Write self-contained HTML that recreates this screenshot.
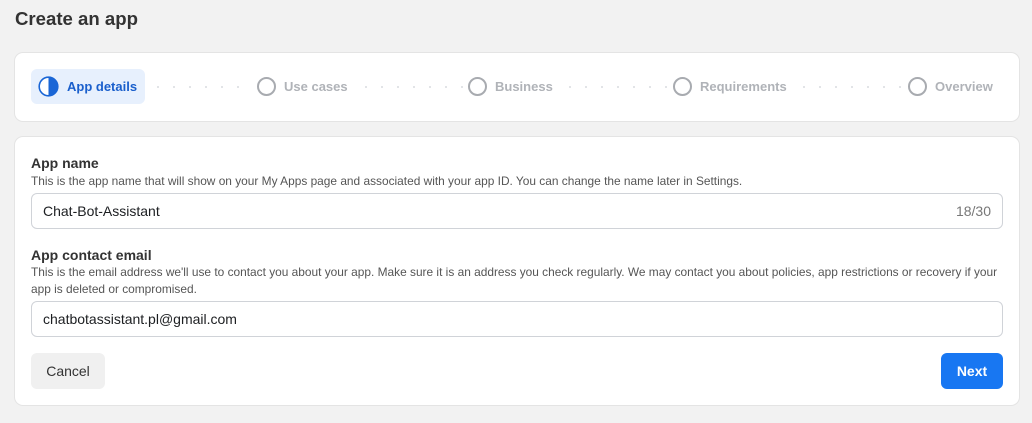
<!DOCTYPE html>
<html><head><style>
*{box-sizing:border-box;margin:0;padding:0}
body{width:1032px;height:423px;background:#f2f2f2;font-family:"Liberation Sans",Arial,sans-serif;color:#1c1e21;position:relative;overflow:hidden}
.abs{position:absolute}
h1{position:absolute;left:15px;top:8px;font-size:18.6px;font-weight:bold;color:#333}
.card{position:absolute;left:15px;width:1004px;background:#fff;border-radius:8px;box-shadow:0 0 0 1px #e4e4e4}
.step{position:absolute;top:76px;height:21px;display:flex;align-items:center;font-size:13px;font-weight:bold;color:#b0b3b8}
.circ{width:19px;height:19px;border:2px solid #a8abb0;border-radius:50%;margin-right:8px}
.dots{position:absolute;top:86px;height:2px;background-image:radial-gradient(circle,#e0e2e5 1px,transparent 1.2px);background-size:16px 2px}
.lbl{position:absolute;left:31px;font-size:14px;font-weight:bold;color:#333}
.desc{position:absolute;left:31px;font-size:11.9px;color:#555;line-height:17px;width:975px}
.inp{position:absolute;left:31px;width:972px;height:36px;border:1px solid #d0d3d8;border-radius:6px;font-size:14px;color:#1c1e21;padding:0 11px;line-height:34px}
.btn{position:absolute;top:353px;height:36px;border-radius:6px;font-size:14px;line-height:36px;text-align:center}
</style></head><body>
<h1>Create an app</h1>
<div class="card" style="top:53px;height:68px"></div>
<div class="abs" style="left:31px;top:69px;width:114px;height:35px;background:#e7f0fd;border-radius:6px"></div>
<svg class="abs" style="left:38px;top:76px" width="21" height="21" viewBox="0 0 21 21"><circle cx="10.5" cy="10.5" r="9.3" fill="#fff" stroke="#1a66d6" stroke-width="1.6"/><path d="M10.5 1.2 A9.3 9.3 0 0 1 10.5 19.8 Z" fill="#1a66d6"/></svg>
<div class="step" style="left:67px;color:#1a5fcc">App details</div>
<div class="dots" style="left:150px;width:100px"></div>
<div class="step" style="left:257px"><div class="circ"></div>Use cases</div>
<div class="dots" style="left:358px;width:106px"></div>
<div class="step" style="left:468px"><div class="circ"></div>Business</div>
<div class="dots" style="left:562px;width:108px"></div>
<div class="step" style="left:673px"><div class="circ"></div>Requirements</div>
<div class="dots" style="left:796px;width:108px"></div>
<div class="step" style="left:908px"><div class="circ"></div>Overview</div>

<div class="card" style="top:137px;height:268px"></div>
<div class="lbl" style="top:155px">App name</div>
<div class="desc" style="top:173px">This is the app name that will show on your My Apps page and associated with your app ID. You can change the name later in Settings.</div>
<div class="inp" style="top:193px">Chat-Bot-Assistant<span style="float:right;color:#777">18/30</span></div>
<div class="lbl" style="top:247px">App contact email</div>
<div class="desc" style="top:264px">This is the email address we'll use to contact you about your app. Make sure it is an address you check regularly. We may contact you about policies, app restrictions or recovery if your app is deleted or compromised.</div>
<div class="inp" style="top:301px">chatbotassistant.pl@gmail.com</div>
<div class="btn" style="left:31px;width:74px;background:#f0f0f0;color:#333">Cancel</div>
<div class="btn" style="left:941px;width:62px;background:#1877f2;color:#fff;font-weight:bold">Next</div>
</body></html>
